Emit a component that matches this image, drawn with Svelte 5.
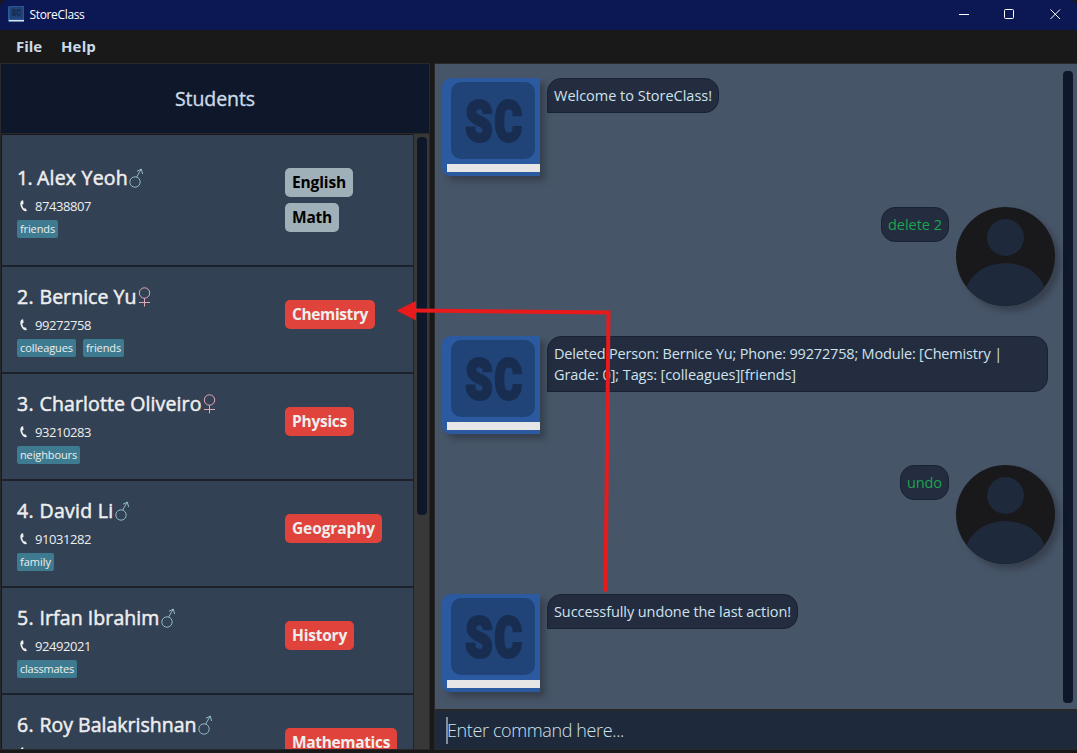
<script>
  const students = [
    { n: 1, name: 'Alex Yeoh', w: 91, male: true, phone: '87438807', tags: [['friends', 35]], modules: [['English', 54], ['Math', 40]], passed: true },
    { n: 2, name: 'Bernice Yu', w: 97, male: false, phone: '99272758', tags: [['colleagues', 53], ['friends', 35]], modules: [['Chemistry', 76]] },
    { n: 3, name: 'Charlotte Oliveiro', w: 162, male: false, phone: '93210283', tags: [['neighbours', 57]], modules: [['Physics', 55]] },
    { n: 4, name: 'David Li', w: 74, male: true, phone: '91031282', tags: [['family', 31]], modules: [['Geography', 83]] },
    { n: 5, name: 'Irfan Ibrahim', w: 120, male: true, phone: '92492021', tags: [['classmates', 54]], modules: [['History', 55]] },
    { n: 6, name: 'Roy Balakrishnan', w: 157, male: true, phone: '92624417', tags: [['colleagues', 53]], modules: [['Mathematics', 98]] }
  ];

  const messages = [
    { bot: true, lines: [['Welcome to StoreClass!', 158]] },
    { bot: false, lines: [['delete 2', 54]] },
    { bot: true, wide: true, lines: [['Deleted Person: Bernice Yu; Phone: 99272758; Module: [Chemistry |', 448], ['Grade: 0]; Tags: [colleagues][friends]', 242]] },
    { bot: false, lines: [['undo', 35]] },
    { bot: true, lines: [['Successfully undone the last action!', 237]] }
  ];

  // Tracks a label so that it takes exactly the given width.
  function fit(node, width) {
    const natural = node.getBoundingClientRect().width;
    node.style.letterSpacing = (width - natural) / node.textContent.length + 'px';
  }
</script>

{#snippet logo(size)}
  <svg class="logo" width={size} height={size} viewBox="0 0 98 98">
    <path d="M10 0H98V98H10Q0 98 0 88V10Q0 0 10 0Z" fill="#2b5aa0" />
    <rect x="9" y="4" width="84" height="77" rx="10" fill="#204478" />
    <g font-family="Roboto" font-weight="900" font-size="55" fill="#182d50" stroke="#182d50" stroke-width="3" stroke-linejoin="miter">
      <text x="23.500" y="62.500" textLength="27" lengthAdjust="spacingAndGlyphs">S</text>
      <text x="52.500" y="62.500" textLength="27.500" lengthAdjust="spacingAndGlyphs">C</text>
    </g>
    <rect x="5" y="86" width="93" height="8" fill="#e6e6e6" />
  </svg>
{/snippet}

<div class="window">
  <header class="titlebar">
    {@render logo(16)}
    <span class="title"><span use:fit={55}>StoreClass</span></span>
    <svg class="controls" width="112" height="30" viewBox="0 0 112 30" fill="none" stroke="#fff">
      <path d="M0 14.5h10" />
      <rect x="45.5" y="9.500" width="9" height="9" rx="1" />
      <path d="M91.500 9.500l9.500 9.500M101 9.500L91.500 19" />
    </svg>
  </header>
  <nav class="menu">
    <span><span use:fit={26}>File</span></span>
    <span><span use:fit={35}>Help</span></span>
  </nav>

  <main>
    <section class="left">
      <h1><span use:fit={80}>Students</span></h1>
      <div class="listwrap">
        <div class="list">
          {#each students as s}
            <article class:tall={s.modules.length > 1}>
              <div class="info">
                <div class="name">
                  <span class="num" class:first={s.n === 1}><span use:fit={s.n === 1 ? 15 : 17}>{s.n}.</span></span>
                  <span use:fit={s.w}>{s.name}</span>
                  {#if s.male}
                    <svg width="16" height="20" viewBox="0 0 16 20" fill="none" stroke="#8fb9c4"><circle cx="7" cy="14" r="5.200" /><path d="M8.700 9L13.300 1M9 3.300L13.300 1L14.600 6" /></svg>
                  {:else}
                    <svg width="16" height="20" viewBox="0 0 16 20" fill="none" stroke="#dfa9b6"><circle cx="7.500" cy="6" r="5.200" /><path d="M7.500 11.200V19.500M2 15.500H13" /></svg>
                  {/if}
                </div>
                <div class="phone">
                  <svg width="9" height="12" viewBox="0 0 9 12"><path d="M3.300.3C1 1.300.8 4.400 2.300 7.600 3.600 10.300 5.800 12 7.600 11L7.900 10.600 6.400 8.200 5 8.600C4 7.500 3.300 5.900 3.300 4.400L4.600 3.700 4.200.5Z" fill="#eee" /></svg>
                  <span use:fit={56}>{s.phone}</span>
                </div>
                <div class="tags">
                  {#each s.tags as [tag, w]}<span class="tag"><span use:fit={w}>{tag}</span></span>{/each}
                </div>
              </div>
              <div class="modules">
                {#each s.modules as [mod, w]}<span class="module" class:passed={s.passed}><span use:fit={w}>{mod}</span></span>{/each}
              </div>
            </article>
          {/each}
        </div>
        <div class="scroll"><div class="thumb"></div></div>
      </div>
    </section>

    <section class="right">
      <div class="chat">
        <div class="messages">
          {#each messages as m}
            <div class="row" class:user={!m.bot}>
              {#if m.bot}
                {@render logo(98)}
              {:else}
                <svg class="avatar" width="99" height="99" viewBox="0 0 99 99">
                  <clipPath id="disc"><circle cx="49.500" cy="49.500" r="49.500" /></clipPath>
                  <g clip-path="url(#disc)">
                    <rect width="99" height="99" fill="#19191b" />
                    <circle cx="49.500" cy="30.500" r="18.500" fill="#1e293b" />
                    <ellipse cx="49.500" cy="89" rx="40.500" ry="33" fill="#1e293b" />
                  </g>
                </svg>
              {/if}
              <div class="bubble" class:wide={m.wide}>
                {#each m.lines as [line, w]}<div class="line"><span use:fit={w}>{line}</span></div>{/each}
              </div>
            </div>
          {/each}
        </div>
        <div class="chatthumb"></div>
      </div>
      <div class="command"><i></i><span use:fit={177}>Enter command here...</span></div>
    </section>
  </main>

  <svg class="arrow" width="1077" height="753" viewBox="0 0 1077 753">
    <path d="M605.500 591.500L608.500 312.500L414 310.500" fill="none" stroke="#e81a1c" stroke-width="4" />
    <path d="M396.500 310.500L416 301V320.500Z" fill="#e81a1c" />
  </svg>
</div>

<style>
  :global(body) { background: #19191a; overflow: hidden; }
  .window { width: 1077px; height: 753px; display: flex; flex-direction: column; position: relative; background: #19191a; font-family: "Open Sans", "Noto Sans", sans-serif; white-space: nowrap; overflow: hidden; }
  svg { flex: none; display: block; }
  .titlebar { height: 30px; background: #0c1854; display: flex; align-items: center; padding-left: 8px; border-radius: 7px 7px 0 0; box-sizing: border-box; flex: none; }
  .titlebar .logo { margin-top: -2px; }
  .title { margin-left: 5.500px; margin-top: -1px; color: #fff; font-size: 12px; }
  .controls { margin-left: auto; margin-right: 6px; }
  .menu { height: 33px; flex: none; display: flex; align-items: center; gap: 19px; padding: 0 0 2px 16px; box-sizing: border-box; color: #cbdce8; font-size: 15px; font-weight: 700; }
  main { height: 687px; display: flex; gap: 4px; }
  .left { width: 430px; display: flex; flex-direction: column; box-sizing: border-box; border: 1px solid #29292b; }
  h1 { margin: 0; height: 70px; flex: none; background: #0f172a; border-bottom: 1px solid #29292b; color: #cbdce8; font-weight: 400; -webkit-text-stroke: .35px #cbdce8; font-size: 19.500px; display: flex; align-items: center; justify-content: center; box-sizing: border-box; }
  .listwrap { flex: 1; min-height: 0; display: flex; }
  .list { width: 413px; flex: none; overflow: hidden; border-right: 1px solid #20232b; box-sizing: border-box; padding-top: 1px; padding-left: 1px; }
  article { height: 107px; display: flex; box-sizing: border-box; background: #334155; border-bottom: 2px solid #1c212c; }
  article.tall { height: 132px; }
  .info { width: 283px; padding: 15px 0 0 15px; box-sizing: border-box; display: flex; flex-direction: column; }
  .tall .info { padding-top: 28px; }
  .name { height: 28px; display: flex; align-items: center; color: #eee; font-size: 19.500px; font-weight: 400; -webkit-text-stroke: .5px #eee; }
  .name svg { margin-top: 1px; }
  .num { width: 22.500px; }
  .num.first { width: 20px; }
  .phone { display: flex; align-items: center; height: 27px; gap: 7px; padding: 1px 0 0 2px; font-size: 13px; color: #eee; }
  .tags { display: flex; gap: 7px; height: 18px; margin-top: 1px; }
  .tag { height: 18px; line-height: 18px; box-sizing: border-box; padding: 0 3px; background: #3e7b91; color: #eee; border-radius: 2px; font-size: 11px; }
  .modules { display: flex; flex-direction: column; align-items: flex-start; gap: 6px; padding-top: 33px; }
  .module { height: 29px; line-height: 29px; padding: 0 7px; border-radius: 5px; background: #e0433b; color: #eee; font-size: 15.500px; font-weight: 700; }
  .module.passed { background: #a0b0b9; color: #000; }
  .scroll { flex: 1; background: #383838; padding: 3px 2px 0 3px; }
  .thumb { width: 10px; height: 378px; background: #0f172a; border-radius: 4px; }
  .right { flex: 1; display: flex; flex-direction: column; border: 1px solid #29292b; border-right: 0; box-sizing: border-box; }
  .chat { height: 645px; flex: none; display: flex; background: #475569; overflow: hidden; }
  .messages { width: 628px; flex: none; padding: 14px 8px 0 7px; box-sizing: border-box; display: flex; flex-direction: column; }
  .row { height: 129px; flex: none; display: flex; align-items: flex-start; gap: 7px; }
  .row > svg { filter: drop-shadow(5px 5px 3px rgba(20, 20, 20, .32)); }
  .bubble { min-height: 35px; box-sizing: border-box; padding: 6px; background: #232d3f; border: 1px solid #182237; border-radius: 14px 14px 14px 0; font-size: 14.500px; line-height: 21px; color: #cfe2ee; }
  .wide { width: 501px; }
  .row.user { flex-direction: row-reverse; }
  .user .bubble { border-radius: 14px; color: #1ba34e; }
  .chatthumb { width: 10px; height: 632px; margin: 7px 0 0; background: #0f172a; border-radius: 4px; }
  .command { flex: 1; border-top: 2px solid #29292b; background: #1e293b; display: flex; align-items: center; padding-left: 11px; color: #cfe2ee; font-size: 18px; font-weight: 300; }
  .command i { width: 2px; height: 27px; background: #7f8da0; flex: none; margin-right: -1px; }
  .arrow { position: absolute; left: 0; top: 0; pointer-events: none; }
</style>
